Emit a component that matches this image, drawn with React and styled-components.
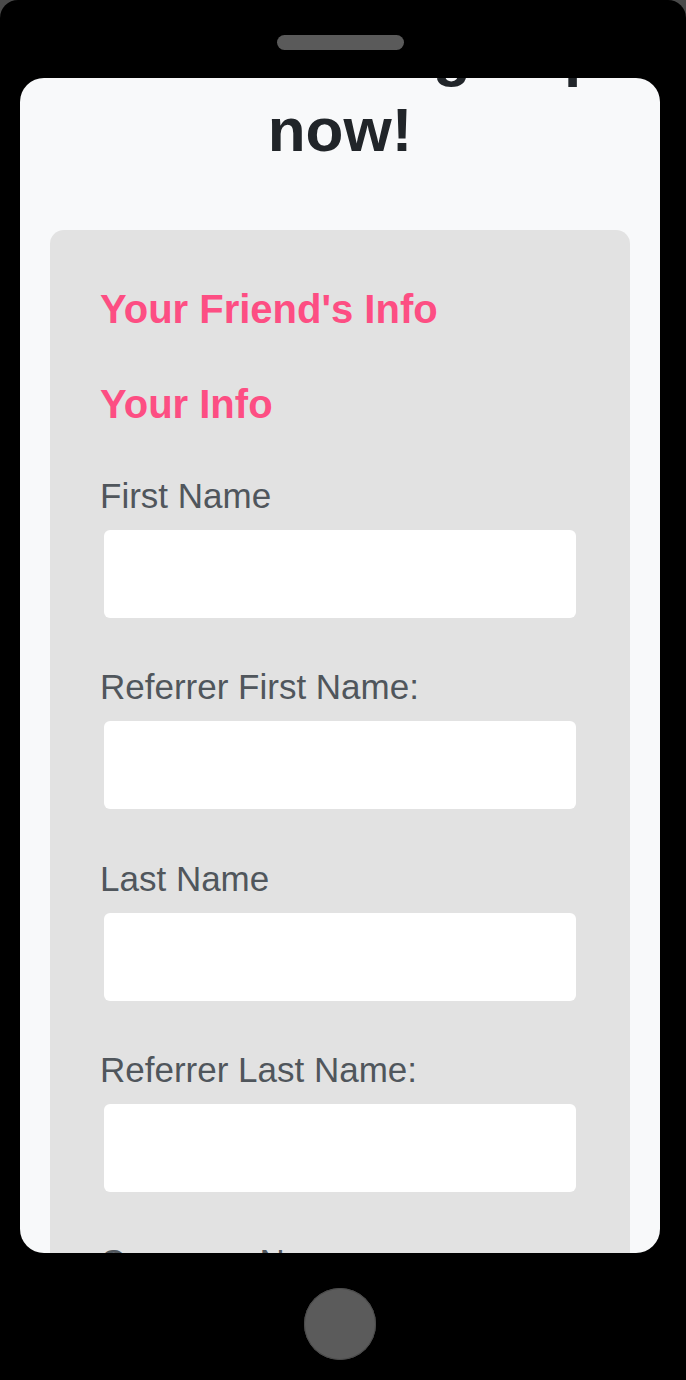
import React from "react";
import styled, { createGlobalStyle } from "styled-components";

const GlobalStyle = createGlobalStyle`
    html, body {
        margin: 0;
        padding: 0;
        background: #4a4a4a;
    }
    body {
        font-family: "Liberation Sans", Arial, sans-serif;
    }
`;

const Phone = styled.div`
    width: 686px;
    height: 1380px;
    box-sizing: border-box;
    padding: 35px 6px 0 0;
    background: #000;
    border-radius: 18px 18px 0 0;
    display: flex;
    flex-direction: column;
    align-items: center;
    overflow: hidden;
`;

const Speaker = styled.div`
    width: 127px;
    height: 15px;
    border-radius: 8px;
    background: #5a5a5a;
    margin-bottom: 28px;
    flex-shrink: 0;
`;

const Screen = styled.div`
    width: 640px;
    height: 1175px;
    flex-shrink: 0;
    border-radius: 24px;
    background: #f8f9fa;
    overflow: hidden;
`;

const Content = styled.div`
    padding: 0 30px;
`;

const Title = styled.h1`
    margin: -64px 0 62px;
    font-size: 62px;
    line-height: 77px;
    font-weight: bold;
    text-align: center;
    color: #212529;
`;

const Card = styled.div`
    background: #e2e2e2;
    border-radius: 14px;
    padding: 55px 50px;
`;

const SectionTitle = styled.h3`
    margin: 0 0 47px;
    font-size: 40px;
    line-height: 48px;
    font-weight: bold;
    color: #fd4e83;
`;

const Group = styled.div`
    margin-bottom: 48.4px;
`;

const Label = styled.label`
    display: block;
    font-size: 35px;
    line-height: 42px;
    color: #50565c;
    margin-bottom: 13px;
`;

const Input = styled.input`
    display: block;
    box-sizing: border-box;
    width: calc(100% - 8px);
    height: 88px;
    margin: 0 4px;
    border: none;
    border-radius: 6px;
    background: #fff;
    outline: none;
    font-size: 32px;
    padding: 0 16px;
`;

const HomeButton = styled.div`
    width: 72px;
    height: 72px;
    margin-top: 35px;
    border-radius: 50%;
    background: #5b5b5b;
    box-shadow: inset 0 0 0 1px #4a4a4a;
    flex-shrink: 0;
`;

const fields = [
    { id: "firstName", label: "First Name" },
    { id: "refFirstName", label: "Referrer First Name:" },
    { id: "lastName", label: "Last Name" },
    { id: "refLastName", label: "Referrer Last Name:" },
    { id: "company", label: "Company Name" },
];

export default function App() {
    return (
        <>
            <GlobalStyle />
            <Phone>
                <Speaker />
                <Screen>
                    <Content>
                        <Title>Refer and sign up now!</Title>
                        <Card>
                            <SectionTitle>Your Friend's Info</SectionTitle>
                            <SectionTitle>Your Info</SectionTitle>
                            {fields.map(f => (
                                <Group key={f.id}>
                                    <Label htmlFor={f.id}>{f.label}</Label>
                                    <Input id={f.id} type="text" />
                                </Group>
                            ))}
                        </Card>
                    </Content>
                </Screen>
                <HomeButton />
            </Phone>
        </>
    );
}
